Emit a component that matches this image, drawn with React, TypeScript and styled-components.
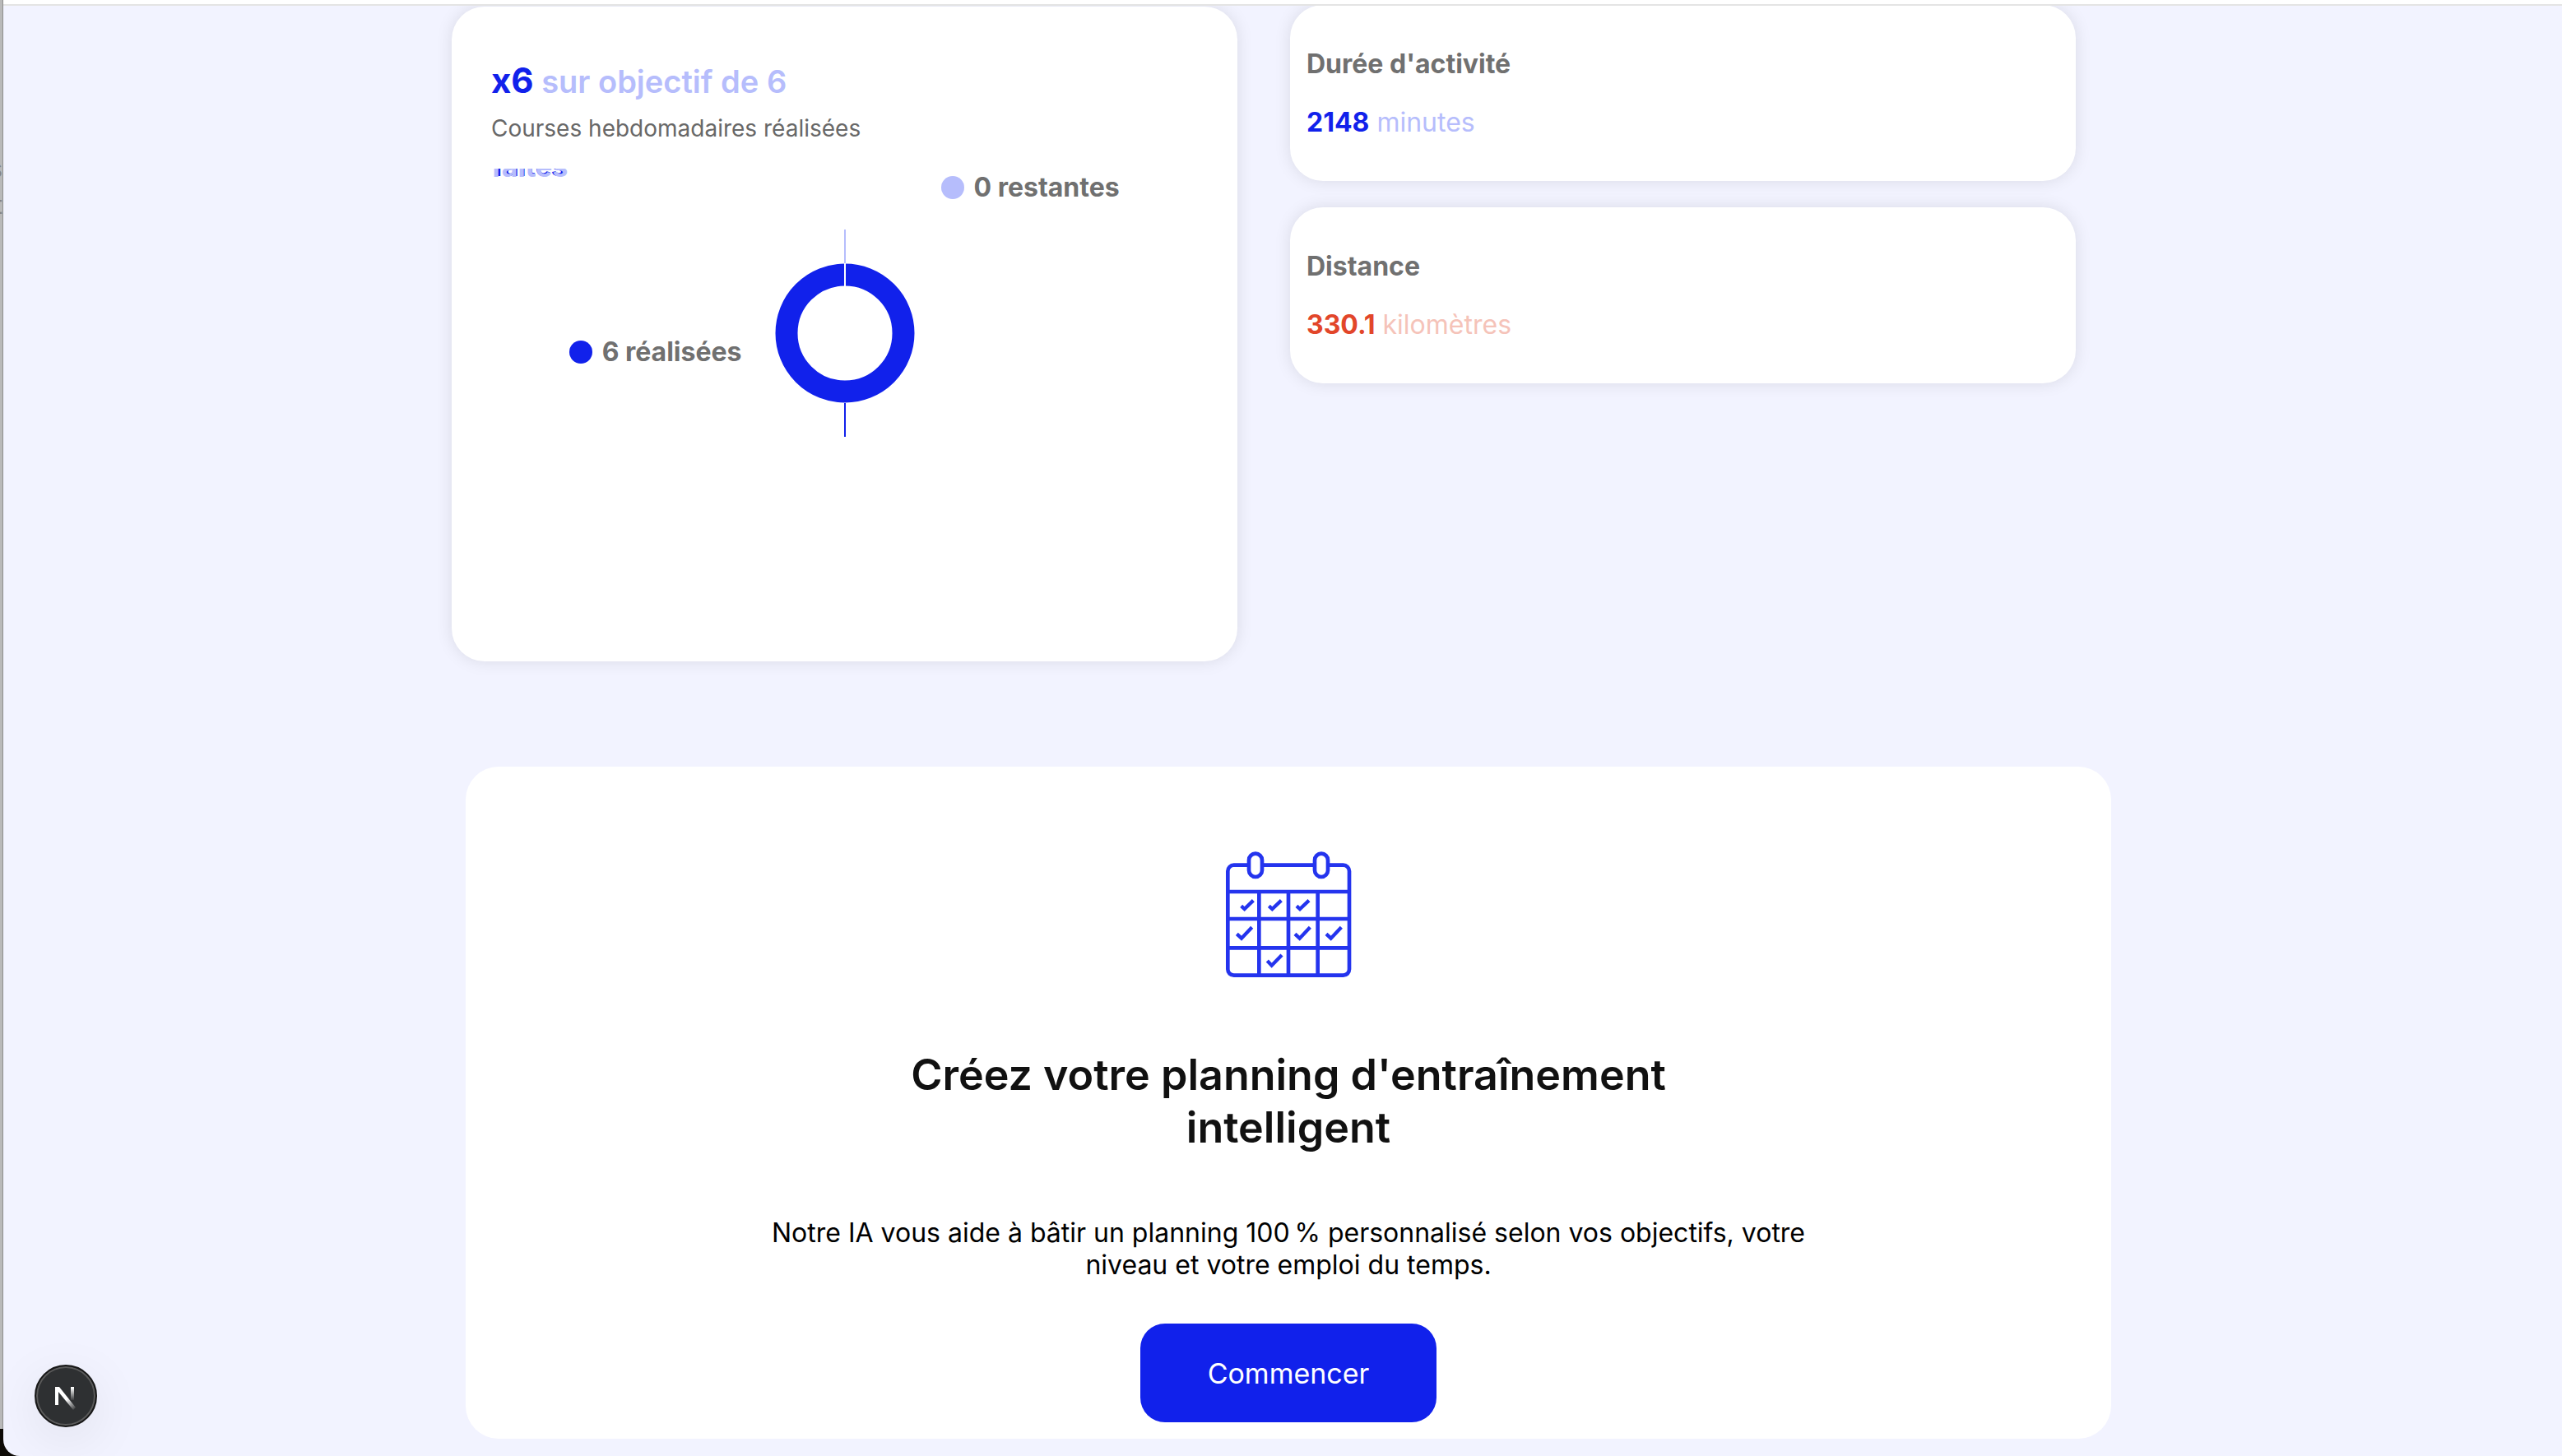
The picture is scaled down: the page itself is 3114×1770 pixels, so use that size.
import React from "react";
import styled, { createGlobalStyle } from "styled-components";

const BLUE = "#1121eb";
const LILAC = "#b6bdfc";
const GREY = "#707070";

const GlobalStyle = createGlobalStyle`
  *, *::before, *::after { box-sizing: border-box; }
  html, body { margin: 0; height: 100%; overflow: hidden; }
  #root { height: 100%; }
  body {
    background: #0d0a06;
    color: #000;
    font-family: Inter, "Liberation Sans", sans-serif;
    font-size: 32px;
    line-height: 39px;
    -webkit-font-smoothing: antialiased;
  }
  h1, h2, p, figure { margin: 0; }
`;

const Screen = styled.div`
  display: flex;
  align-items: flex-start;
  height: 100vh;
  overflow: hidden;
`;

const Backdrop = styled.aside`
  flex: none;
  display: flex;
  flex-direction: column;
  align-items: flex-end;
  gap: 5px;
  width: 4px;
  height: calc(100vh - 33px);
  padding-top: 186px;
  overflow: hidden;
  background: #b9b9b9;
  border-right: 1px solid #8e8e8e;
  color: #858585;
  font-size: 30px;
`;

const Page = styled.div`
  flex: 1;
  min-width: 0;
  height: 100vh;
  overflow: hidden;
  background: #f2f3ff;
  border-bottom-left-radius: 20px;
`;

const TopBar = styled.header`
  position: relative;
  height: 7px;
  background: #fff;
  border-bottom: 2px solid #e4e4e4;
`;

const Stats = styled.section`
  display: grid;
  grid-template-columns: 1fr 1fr;
  gap: 64px;
  width: 100%;
  max-width: 2020px;
  margin: 0 auto;
  padding: 0 46px 0 0;
`;

const Card = styled.article`
  background: #fff;
  border-radius: 40px;
  box-shadow: 0 0 20px rgba(0, 0, 0, 0.1);
`;

const GoalCard = styled(Card)`
  height: 796px;
  margin-top: 1px;
  padding: 64px 48px 0;
`;

const GoalTitle = styled.h1`
  color: ${LILAC};
  font-size: 38px;
  font-weight: 600;
  line-height: 51px;
`;

const GoalCount = styled.strong`
  color: ${BLUE};
  font-size: 42px;
  font-weight: 700;
`;

const GoalCaption = styled.p`
  margin-top: 14px;
  color: #686868;
  font-size: 28px;
  line-height: 34px;
`;

const Chart = styled.figure`
  display: grid;
  grid-template-columns: 1fr 170px 1fr;
  margin-top: 32px;
`;

const DoneSide = styled.div`
  display: flex;
  flex-direction: column;
  justify-content: space-between;
  height: 242px;
`;

const ClippedLegend = styled.div`
  display: grid;
  grid-template-rows: 10px;
  align-items: end;
  height: 10px;
  overflow: hidden;
  font-weight: 700;
  line-height: 24px;
`;

const ClippedText = styled.span<{ $color: string; $size: number; $inset: number }>`
  grid-area: 1 / 1;
  padding-left: ${(p) => p.$inset}px;
  color: ${(p) => p.$color};
  font-size: ${(p) => p.$size}px;
`;

const Legend = styled.div<{ $side: "left" | "right" }>`
  display: flex;
  align-items: center;
  align-self: ${(p) => (p.$side === "left" ? "flex-end" : "flex-start")};
  gap: 12px;
  margin: ${(p) => (p.$side === "left" ? "0 40px 0 0" : "3px 0 0 32px")};
  color: ${GREY};
  font-weight: 700;
`;

const Dot = styled.i<{ $color: string }>`
  width: 28px;
  height: 28px;
  border-radius: 50%;
  background: ${(p) => p.$color};
`;

const Ring = styled.svg`
  display: block;
  width: 170px;
  height: 252px;
  margin-top: 74px;
`;

const Metrics = styled.div`
  display: flex;
  flex-direction: column;
  gap: 32px;
  margin-top: -1px;
`;

const MetricCard = styled(Card)`
  height: 214px;
  padding: 52px 20px 0;
`;

const MetricTitle = styled.h2`
  color: ${GREY};
  font-size: 32px;
  font-weight: 700;
  line-height: 39px;
`;

const MetricValue = styled.p<{ $color: string }>`
  margin-top: 32px;
  color: ${(p) => p.$color};
`;

const MetricNumber = styled.strong<{ $color: string }>`
  color: ${(p) => p.$color};
  font-weight: 700;
`;

const PlanningArea = styled.div`
  padding: 128px 0 0 14px;
`;

const Planning = styled.section`
  display: flex;
  flex-direction: column;
  align-items: center;
  max-width: 2000px;
  height: 817px;
  margin: 0 auto;
  padding-top: 99px;
  background: #fff;
  border-radius: 40px;
  text-align: center;
`;

const Calendar = styled.svg`
  display: block;
  width: 160px;
  height: 160px;
`;

const PlanningTitle = styled.h2`
  max-width: 1000px;
  margin-top: 84px;
  color: #111;
  font-size: 52px;
  font-weight: 600;
  line-height: 64px;
`;

const PlanningText = styled.p`
  max-width: 1300px;
  margin-top: 76px;
`;

const StartButton = styled.button`
  width: 360px;
  height: 120px;
  margin-top: 52px;
  border: 0;
  border-radius: 30px;
  background: ${BLUE};
  color: #fff;
  font: 400 34px Inter, "Liberation Sans", sans-serif;
  cursor: pointer;
`;

const DevBadge = styled.button`
  position: fixed;
  left: 42px;
  bottom: 35px;
  display: grid;
  place-items: center;
  width: 76px;
  height: 76px;
  padding: 0;
  border: 2px solid #171717;
  border-radius: 50%;
  background: #2e3032;
  box-shadow: inset 0 0 0 2px #5a5a5a, 0 16px 64px rgba(0, 0, 0, 0.08);
`;

const ticks = [
  "M206 304 L218 315 L250 284",
  "M307 304 L319 315 L352 284",
  "M408 304 L420 315 L453 284",
  "M190 406 L207 422 L245 382",
  "M402 406 L419 422 L457 382",
  "M516 406 L533 422 L571 382",
  "M301 504 L317 521 L354 483",
];

function CalendarIcon() {
  return (
    <Calendar viewBox="138 93 480 480" fill="none" stroke="#2434ee" aria-hidden="true">
      <g strokeWidth="14">
        <rect x="157" y="155" width="443" height="402" rx="22" />
        <path d="M157 252H600M157 351H600M157 457H600M271 252V557M378 252V557M485 252V557" />
        <rect x="234" y="113" width="48" height="85" rx="24" fill="#fff" />
        <rect x="474" y="113" width="48" height="85" rx="24" fill="#fff" />
      </g>
      {ticks.map((d) => (
        <path key={d} d={d} strokeWidth="13" />
      ))}
    </Calendar>
  );
}

function GoalChart() {
  return (
    <Chart>
      <DoneSide>
        <ClippedLegend>
          <ClippedText $color={BLUE} $size={32} $inset={3}>
            faites
          </ClippedText>
          <ClippedText $color={LILAC} $size={34} $inset={0}>
            faites
          </ClippedText>
        </ClippedLegend>
        <Legend $side="left">
          <Dot $color={BLUE} />
          6 réalisées
        </Legend>
      </DoneSide>
      <Ring viewBox="0 0 170 252" aria-hidden="true">
        <path d="M85 0V41" stroke={LILAC} strokeWidth="2" />
        <path d="M85 211V252" stroke={BLUE} strokeWidth="2" />
        <circle cx="85" cy="126" r="71" fill="none" stroke={BLUE} strokeWidth="27" />
        <path d="M85 41V69" stroke="#fff" strokeWidth="2" />
      </Ring>
      <Legend $side="right">
        <Dot $color={LILAC} />
        0 restantes
      </Legend>
    </Chart>
  );
}

export default function App() {
  return (
    <>
      <GlobalStyle />
      <Screen>
        <Backdrop aria-hidden="true">
          <span>s</span>
          <span>t</span>
        </Backdrop>
        <Page>
          <TopBar />
          <main>
            <Stats>
              <GoalCard>
                <GoalTitle>
                  <GoalCount>x6</GoalCount> sur objectif de 6
                </GoalTitle>
                <GoalCaption>Courses hebdomadaires réalisées</GoalCaption>
                <GoalChart />
              </GoalCard>
              <Metrics>
                <MetricCard>
                  <MetricTitle>Durée d'activité</MetricTitle>
                  <MetricValue $color={LILAC}>
                    <MetricNumber $color={BLUE}>2148</MetricNumber> minutes
                  </MetricValue>
                </MetricCard>
                <MetricCard>
                  <MetricTitle>Distance</MetricTitle>
                  <MetricValue $color="#f5c3b9">
                    <MetricNumber $color="#e2462a">330.1</MetricNumber> kilomètres
                  </MetricValue>
                </MetricCard>
              </Metrics>
            </Stats>
            <PlanningArea>
              <Planning>
                <CalendarIcon />
                <PlanningTitle>Créez votre planning d'entraînement intelligent</PlanningTitle>
                <PlanningText>
                  Notre IA vous aide à bâtir un planning 100&#8239;% personnalisé selon vos objectifs, votre niveau et
                  votre emploi du temps.
                </PlanningText>
                <StartButton type="button">Commencer</StartButton>
              </Planning>
            </PlanningArea>
          </main>
        </Page>
        <DevBadge type="button" aria-label="Next.js">
          <svg width="26" height="24" viewBox="0 0 26 24" fill="none" overflow="visible" aria-hidden="true">
            <defs>
              <linearGradient id="diagonal" x1="14" y1="16" x2="25" y2="29" gradientUnits="userSpaceOnUse">
                <stop stopColor="#fff" />
                <stop offset="1" stopColor="#fff" stopOpacity="0" />
              </linearGradient>
              <linearGradient id="stem" x1="0" y1="2" x2="0" y2="18" gradientUnits="userSpaceOnUse">
                <stop stopColor="#fff" />
                <stop offset="1" stopColor="#fff" stopOpacity="0" />
              </linearGradient>
            </defs>
            <path d="M0 1H5L25 26L22 29L4 7V23H0Z" fill="url(#diagonal)" />
            <path d="M19 1H23V17H19Z" fill="url(#stem)" />
          </svg>
        </DevBadge>
      </Screen>
    </>
  );
}
